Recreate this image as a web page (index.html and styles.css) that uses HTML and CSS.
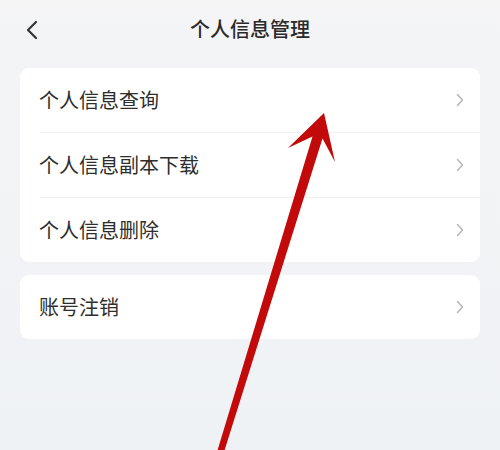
FILE: index.html
```html
<!DOCTYPE html>
<html lang="zh-CN">
<head>
<meta charset="utf-8">
<link rel="stylesheet" href="styles.css">
</head>
<body>
<div class="page">
  <header class="topbar">
    <svg class="back" width="14" height="20" viewBox="0 0 14 20"><polyline points="11,2 3,10 11,18" fill="none" stroke="#333" stroke-width="2.2" stroke-linecap="round" stroke-linejoin="round"/></svg>
    <h1 class="title">个人信息管理</h1>
  </header>
  <main class="content">
    <section class="card">
      <div class="row"><span class="label">个人信息查询</span><svg class="chev" width="8" height="14" viewBox="0 0 8 14"><polyline points="1.5,1.5 6.5,7 1.5,12.5" fill="none" stroke="#b3b3b3" stroke-width="1.4" stroke-linecap="round" stroke-linejoin="round"/></svg></div>
      <div class="row"><span class="label">个人信息副本下载</span><svg class="chev" width="8" height="14" viewBox="0 0 8 14"><polyline points="1.5,1.5 6.5,7 1.5,12.5" fill="none" stroke="#b3b3b3" stroke-width="1.4" stroke-linecap="round" stroke-linejoin="round"/></svg></div>
      <div class="row"><span class="label">个人信息删除</span><svg class="chev" width="8" height="14" viewBox="0 0 8 14"><polyline points="1.5,1.5 6.5,7 1.5,12.5" fill="none" stroke="#b3b3b3" stroke-width="1.4" stroke-linecap="round" stroke-linejoin="round"/></svg></div>
    </section>
    <section class="card">
      <div class="row"><span class="label">账号注销</span><svg class="chev" width="8" height="14" viewBox="0 0 8 14"><polyline points="1.5,1.5 6.5,7 1.5,12.5" fill="none" stroke="#b3b3b3" stroke-width="1.4" stroke-linecap="round" stroke-linejoin="round"/></svg></div>
    </section>
  </main>
  <svg class="arrow" width="500" height="450" viewBox="0 0 500 450">
    <polygon points="324,113 335,162 322.5,138.5 224,452 217,452 312.5,136.5 288,148" fill="#c30a0a"/>
  </svg>
</div>
</body>
</html>
```

FILE: styles.css
```css
html, body {
  margin: 0;
  padding: 0;
}
body {
  width: 500px;
  height: 450px;
  overflow: hidden;
  font-family: "Noto Sans CJK SC", "Noto Sans", sans-serif;
  color: #2e2e2e;
  background: linear-gradient(180deg, #f5f5f6 0px, #f3f4f6 60px, #eff2f5 450px);
}
.page {
  position: relative;
  width: 500px;
  height: 450px;
}
.topbar {
  position: relative;
  height: 58px;
  display: flex;
  align-items: center;
  justify-content: center;
}
.back {
  position: absolute;
  left: 25px;
  top: 20px;
}
.title {
  margin: 0;
  font-size: 20px;
  font-weight: 500;
  color: #2a2a2a;
  line-height: 1;
}
.content {
  padding: 10px 20px 0;
  display: flex;
  flex-direction: column;
  gap: 13px;
}
.card {
  background: #fff;
  border-radius: 9px;
  display: flex;
  flex-direction: column;
}
.row {
  height: 64px;
  display: flex;
  align-items: center;
  justify-content: space-between;
  padding: 0 16px 0 19px;
  position: relative;
}
.row + .row {
  border-top: 1px solid transparent;
}
.row + .row::before {
  content: "";
  position: absolute;
  left: 20px;
  right: 0;
  top: -1px;
  height: 1px;
  background: #f0f1f3;
}
.label {
  font-size: 20px;
  line-height: 1;
  color: #2e2e2e;
}
.chev {
  display: block;
}
.arrow {
  position: absolute;
  left: 0;
  top: 0;
  pointer-events: none;
}
```
